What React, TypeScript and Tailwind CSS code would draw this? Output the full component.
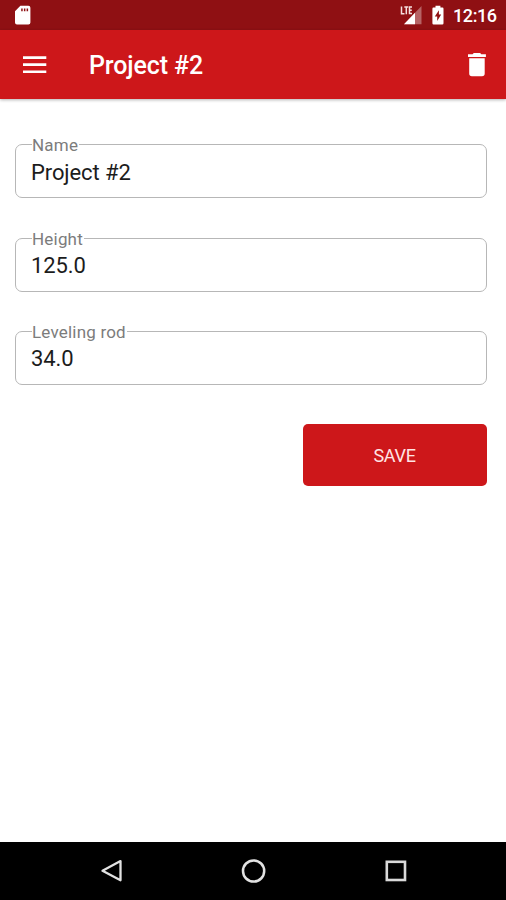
function StatusBar() {
  return (
    <div className="flex h-[30px] shrink-0 items-center bg-[#8f1013] text-white">
      <svg className="ml-[15px] h-[20px] w-[16px]" viewBox="0 0 16 20" fill="#fff">
        <path
          fillRule="evenodd"
          d="M5.4 .8H13.4Q15.4 .8 15.4 2.8V17.6Q15.4 19.6 13.4 19.6H2Q0 19.6 0 17.6V6.2ZM6.2 3.4V6.2H7.7V3.4ZM8.9 3.4V6.2H10.4V3.4ZM11.6 3.4V6.2H13.1V3.4Z"
        />
      </svg>
      <div className="flex-1" />
      <svg className="h-[22px] w-[22px]" viewBox="0 0 22 22">
        <path d="M21.5 2V20.2H4Z" fill="#fff" opacity=".35" />
        <path d="M15 8.8V20.2H4Z" fill="#fff" />
        <g fill="none" stroke="#f5dede" strokeWidth="1.5">
          <path d="M1.5 2.4V9.8H4.5M4.3 3H8.2M6.3 3V10.2M12 3H9.5V9.6H12M9.5 6.3H11.8" />
        </g>
      </svg>
      <svg className="ml-[10px] h-[20px] w-[12px]" viewBox="0 0 12 20">
        <path
          d="M3.5 .8H8.4V2.6H10.5Q11.5 2.6 11.5 3.7V18.2Q11.5 19.5 10.3 19.5H1.6Q.4 19.5 .4 18.2V3.7Q.4 2.6 1.4 2.6H3.5Z"
          fill="#fff"
        />
        <path d="M6.9 5.2V9.6H9.2L5.2 16V11.6H2.8Z" fill="#8f1013" />
      </svg>
      <span className="mt-[1px] ml-[9px] w-[53px] text-[18px] leading-[22px] font-medium tracking-[-0.4px] whitespace-nowrap">
        12:16
      </span>
    </div>
  );
}

function AppBar() {
  return (
    <header className="flex h-[69px] shrink-0 items-center bg-[#cd171a] pr-[20px] pl-[23px] text-white shadow-[0_1px_3px_rgba(0,0,0,0.3)]">
      <svg className="h-[18px] w-[24px]" viewBox="0 0 24 18" fill="#fff">
        <path d="M0 .2H23.3V2.9H0ZM0 7.3H23.3V10H0ZM0 14.4H23.3V17.1H0Z" />
      </svg>
      <h1 className="mt-[3px] ml-[42px] flex-1 text-[25px] leading-[30px] font-medium tracking-[-0.1px] whitespace-nowrap">
        Project #2
      </h1>
      <svg className="h-[24px] w-[18px]" viewBox="0 0 18 24" fill="#fff">
        <path d="M0 1.2H4.6L5.8 0H12.1L13.3 1.2H17.9V4H0ZM1.2 5.2H16.7V20.6Q16.7 23.3 14 23.3H3.9Q1.2 23.3 1.2 20.6Z" />
      </svg>
    </header>
  );
}

function Field({ label, value }: { label: string; value: string }) {
  return (
    <div className="relative flex h-[54px] items-center rounded-[7px] border-[1.5px] border-[#b7b7b7] pl-[15px]">
      <span className="absolute -top-[10px] left-[16px] bg-white pr-[1px] text-[17px] leading-[20px] tracking-[0.2px] whitespace-nowrap text-[#7c7c7c]">
        {label}
      </span>
      <span className="mt-[3px] text-[22px] leading-[28px] tracking-[-0.1px] whitespace-nowrap text-[#1c1c1c]">
        {value}
      </span>
    </div>
  );
}

function NavigationBar() {
  return (
    <nav className="flex h-[58px] shrink-0 items-center justify-between bg-black pr-[98px] pl-[100px]">
      <svg className="h-[26px] w-[24px]" viewBox="0 0 24 26" fill="none" stroke="#e2e2e2" strokeWidth="2.3">
        <path d="M20.5 3.1V22.3L2.5 12.7Z" strokeLinejoin="round" />
      </svg>
      <svg className="h-[26px] w-[26px]" viewBox="0 0 26 26" fill="none" stroke="#e2e2e2" strokeWidth="2.5">
        <circle cx="12.6" cy="13" r="10.6" />
      </svg>
      <svg className="h-[26px] w-[24px]" viewBox="0 0 24 26" fill="none" stroke="#dadada" strokeWidth="2.6">
        <rect x="2.8" y="3.8" width="18.2" height="18.2" />
      </svg>
    </nav>
  );
}

export default function App() {
  return (
    <div className="flex h-[900px] w-[506px] flex-col overflow-hidden bg-white font-['Roboto',sans-serif]">
      <StatusBar />
      <AppBar />
      <main className="flex flex-1 flex-col pt-[45.4px] pr-[18.6px] pl-[15px]">
        <div className="flex flex-col gap-[39.3px]">
          <Field label="Name" value="Project #2" />
          <Field label="Height" value="125.0" />
          <Field label="Leveling rod" value="34.0" />
        </div>
        <button className="mt-[39.2px] h-[61.5px] w-[184.8px] self-end rounded-[5px] bg-[#cd171a] pt-[2px] pr-[1px] text-[18px] tracking-[-0.3px] text-[#ffe4e4]">
          SAVE
        </button>
      </main>
      <NavigationBar />
    </div>
  );
}
